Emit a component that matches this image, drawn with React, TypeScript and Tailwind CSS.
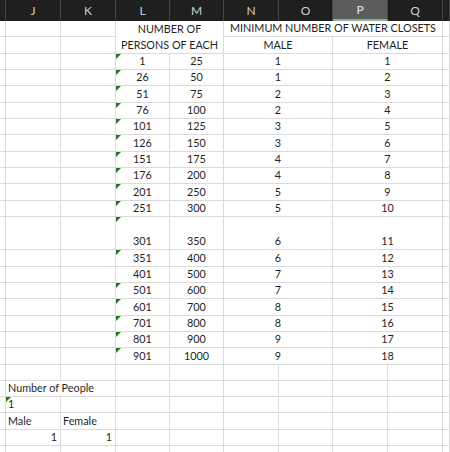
import React from "react";

type Cell = {
  text?: string;
  span?: number;
  rows?: number;
  align?: "l" | "c" | "r";
  tri?: boolean;
  noR?: boolean;
};

const cols = ["", "J", "K", "L", "M", "N", "O", "P", "Q", ""];

const data: [string, string, string, string, boolean][] = [
  ["1", "25", "1", "1", true],
  ["26", "50", "1", "2", true],
  ["51", "75", "2", "3", true],
  ["76", "100", "2", "4", true],
  ["101", "125", "3", "5", true],
  ["126", "150", "3", "6", true],
  ["151", "175", "4", "7", true],
  ["176", "200", "4", "8", true],
  ["201", "250", "5", "9", true],
  ["251", "300", "5", "10", true],
  ["301", "350", "6", "11", true],
  ["351", "400", "6", "12", true],
  ["401", "500", "7", "13", false],
  ["501", "600", "7", "14", true],
  ["601", "700", "8", "15", true],
  ["701", "800", "8", "16", true],
  ["801", "900", "9", "17", true],
  ["901", "1000", "9", "18", true],
];

const blank = (n: number): Cell[] => Array.from({ length: n }, () => ({}));

const rows: Cell[][] = [
  [
    ...blank(3),
    { text: "NUMBER OF\nPERSONS OF EACH", span: 2, rows: 2, align: "c" },
    { text: "MINIMUM NUMBER OF WATER CLOSETS", span: 4, align: "c" },
    {},
  ],
  [...blank(3), { text: "MALE", span: 2, align: "c" }, { text: "FEMALE", span: 2, align: "c" }, {}],
  ...data.map(([a, b, m, f, tri]) => [
    ...blank(3),
    { text: a, align: "c" as const, tri },
    { text: b, align: "c" as const },
    { text: m, span: 2, align: "c" as const },
    { text: f, span: 2, align: "c" as const },
    {},
  ]),
  blank(10),
  [{}, { text: "Number of People", noR: true }, ...blank(8)],
  [{}, { text: "1", tri: true }, ...blank(8)],
  [{}, { text: "Male" }, { text: "Female" }, ...blank(7)],
  [{}, { text: "1", align: "r" }, { text: "1", align: "r" }, ...blank(7)],
  blank(10),
];

function GridCell({ c }: { c: Cell }) {
  const span = c.span === 4 ? "col-span-4" : c.span === 2 ? "col-span-2" : "";
  const rspan = c.rows === 2 ? "row-span-2" : "";
  const just =
    c.align === "c"
      ? "justify-center text-center"
      : c.align === "r"
      ? "justify-end pr-[3px]"
      : "justify-start pl-[2px]";
  return (
    <div
      className={`relative flex items-end ${span} ${rspan} ${just} ${
        c.noR ? "" : "border-r"
      } border-b border-[#dadada] whitespace-pre leading-[16px]`}
    >
      {c.tri && (
        <span className="absolute top-0 left-0 w-0 h-0 border-t-[5px] border-r-[5px] border-t-[#1f7a1f] border-r-transparent" />
      )}
      {c.text && <span className="relative z-10">{c.text}</span>}
    </div>
  );
}

export default function App() {
  return (
    <div className="w-[450px] h-[452px] overflow-hidden bg-white font-['Lato',sans-serif] text-[10.8px] text-[#1f1f1f]">
      <div className="grid grid-cols-[6px_55px_55px_54px_54px_55px_54px_55px_55px_1fr] grid-rows-[21px_repeat(12,16.33px)_33.5px_repeat(13,16.3px)]">
        {cols.map((h, i) => (
          <div
            key={"h" + i}
            className={`flex items-center justify-center border-r border-[#454545] text-[12px] ${
              h === "P"
                ? "bg-[#5c5c5c] text-[#e8e8e8] border-b-2 border-b-[#8fb08f]"
                : "bg-[#1f1f1f] text-[#cfcfcf]"
            }`}
          >
            {h}
          </div>
        ))}
        {rows.map((r, ri) => r.map((c, ci) => <GridCell key={ri + "-" + ci} c={c} />))}
      </div>
    </div>
  );
}
